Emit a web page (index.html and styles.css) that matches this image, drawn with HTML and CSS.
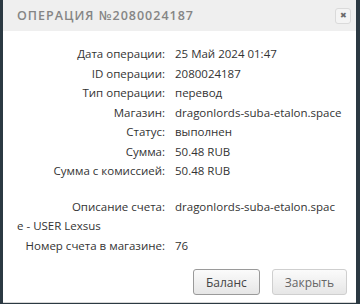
FILE: index.html
```html
<!DOCTYPE html>
<html lang="ru">

<head>
    <meta charset="UTF-8">
    <meta name="viewport" content="width=device-width, initial-scale=1.0">
    <title>Операция №2080024187</title>
    <link rel="stylesheet" href="styles.css">
</head>

<body>
    <div class="dialog">
        <div class="dialog-header">
            <span class="dialog-title">Операция №2080024187</span>
            <button class="close-button" title="Закрыть">&#x2716;</button>
        </div>

        <div class="dialog-body">
            <div class="row"><span class="label">Дата операции:</span>25 Май 2024 01:47</div>
            <div class="row"><span class="label">ID операции:</span>2080024187</div>
            <div class="row"><span class="label">Тип операции:</span>перевод</div>
            <div class="row"><span class="label">Магазин:</span>dragonlords-suba-etalon.space</div>
            <div class="row"><span class="label">Статус:</span>выполнен</div>
            <div class="row"><span class="label">Сумма:</span>50.48 RUB</div>
            <div class="row"><span class="label">Сумма с комиссией:</span>50.48 RUB</div>
            <div class="spacer"></div>
            <div class="row row-wrap"><span class="label">Описание счета:</span>dragonlords-suba-etalon.space - USER Lexsus</div>
            <div class="row"><span class="label">Номер счета в магазине:</span>76</div>
        </div>

        <div class="dialog-footer">
            <button class="btn btn-primary">Баланс</button>
            <button class="btn">Закрыть</button>
        </div>
    </div>
</body>

</html>
```

FILE: styles.css
```css
html,
body {
    margin: 0;
    padding: 0;
}

body {
    background-color: #2b3942;
    font-family: "Open Sans", Arial, sans-serif;
    width: 360px;
    height: 304px;
    overflow: hidden;
}

.dialog {
    margin: 0 4px 0 3px;
    height: 302px;
    background-color: #fff;
    border-bottom: 1px solid #d6d6d6;
    display: flex;
    flex-direction: column;
}

.dialog-header {
    height: 31px;
    background-color: #efefef;
    display: flex;
    align-items: center;
    justify-content: space-between;
    padding: 0 5px 0 14px;
}

.dialog-title {
    font-family: "Open Sans", sans-serif;
    font-size: 12.5px;
    font-weight: 600;
    text-transform: uppercase;
    letter-spacing: 1px;
    color: #858585;
}

.close-button {
    width: 16px;
    height: 16px;
    padding: 0;
    border: 1px solid #dadada;
    border-radius: 3px;
    background-color: #f4f4f4;
    color: #6a6a6a;
    font-size: 8px;
    line-height: 14px;
    cursor: pointer;
}

.dialog-body {
    flex: 1;
    padding: 13px 15px 0 14px;
    font-size: 11.5px;
    color: #333;
}

.row {
    line-height: 19.5px;
    white-space: nowrap;
}

.row-wrap {
    white-space: normal;
    word-break: break-all;
}

.spacer {
    height: 16px;
}

.label {
    display: inline-block;
    width: 148px;
    margin-right: 10px;
    text-align: right;
    word-break: normal;
}

.dialog-footer {
    display: flex;
    justify-content: flex-end;
    gap: 12px;
    padding: 0 9px 7px 0;
}

.btn {
    height: 26px;
    padding: 0 12px;
    font-family: "Open Sans", Arial, sans-serif;
    font-size: 12px;
    color: #666;
    border: 1px solid #cfcfcf;
    border-radius: 3px;
    background: linear-gradient(#fbfbfb, #e6e6e6);
    cursor: pointer;
}

.btn-primary {
    color: #444;
    border-color: #9a9a9a;
}
```
